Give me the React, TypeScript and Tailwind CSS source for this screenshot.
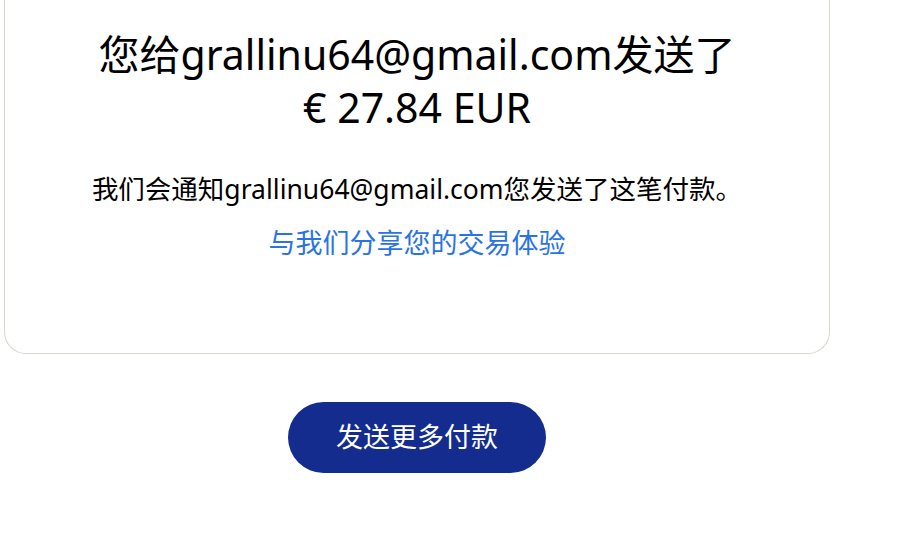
export default function App() {
  const font = { fontFamily: '"Noto Sans", "Noto Sans CJK SC", sans-serif' };
  return (
    <div className="w-[918px] h-[547px] bg-white overflow-hidden" style={font}>
      <div className="ml-[4px] w-[826px] flex flex-col items-center">
        <div className="w-full border-x border-b border-[#d9d6ce] rounded-b-[22px] flex flex-col items-center pt-[28px] pb-[91px]">
          <h1 className="text-[41px] leading-[53px] text-black text-center font-normal">
            您给grallinu64@gmail.com发送了
            <br />€ 27.84 EUR
          </h1>
          <p className="mt-[36px] text-[26.5px] leading-[38px] text-black">
            我们会通知grallinu64@gmail.com您发送了这笔付款。
          </p>
          <a className="mt-[16px] text-[27px] leading-[38px] text-[#2a73e3]" href="#">
            与我们分享您的交易体验
          </a>
        </div>
        <button className="mt-[48px] w-[258px] h-[71px] rounded-full bg-[#142c8e] text-white text-[27px]">
          发送更多付款
        </button>
      </div>
    </div>
  );
}
